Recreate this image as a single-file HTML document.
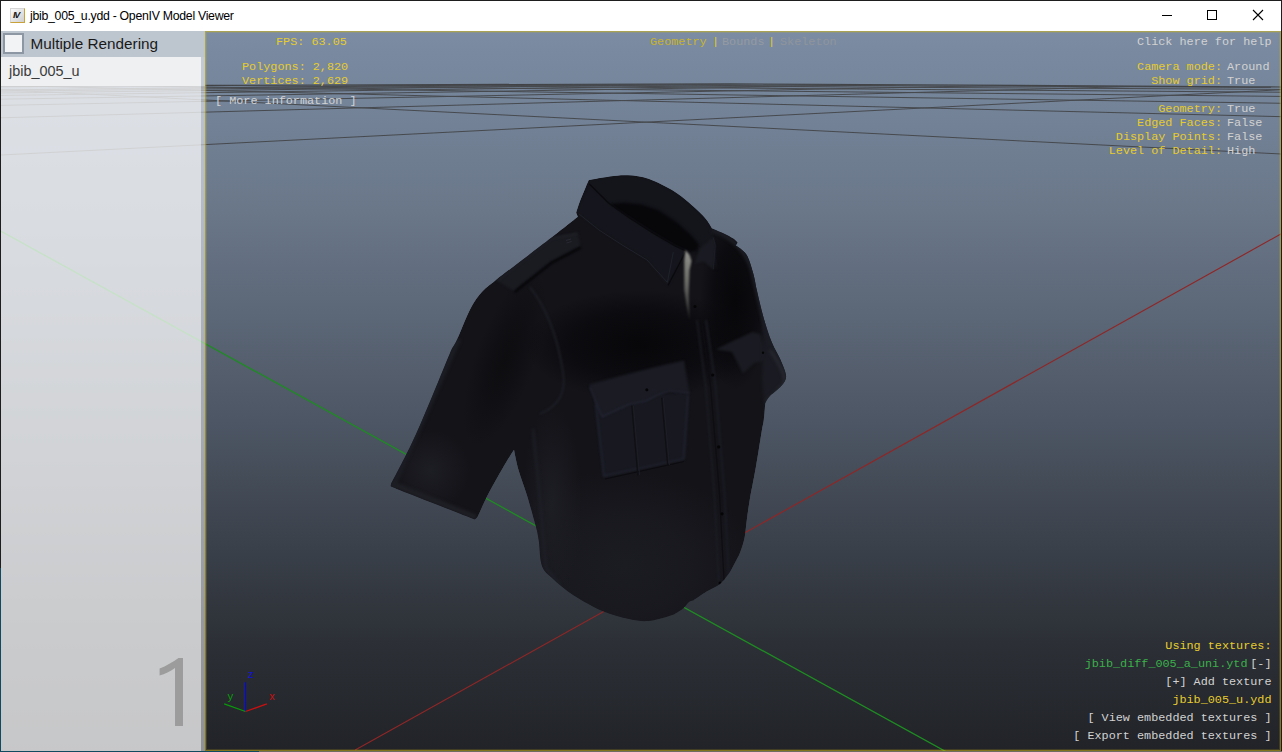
<!DOCTYPE html>
<html><head><meta charset="utf-8">
<style>
html,body{margin:0;padding:0;width:1282px;height:752px;overflow:hidden;background:#1e1e1e;}
body{position:relative;font-family:"Liberation Sans",sans-serif;}
.abs{position:absolute;}
svg{position:absolute;left:0;top:0;}
.mono{position:absolute;font-family:"Liberation Mono",monospace;font-size:11.8px;white-space:nowrap;line-height:14px;}
.r{text-align:right;}
.y{color:#e6cc2e;}
.w{color:#d2d2d2;}
.g{color:#3bb04a;}
</style></head><body>
<svg width="1282" height="752" viewBox="0 0 1282 752">
<defs>
<linearGradient id="bg" x1="0" y1="32" x2="0" y2="750" gradientUnits="userSpaceOnUse">
<stop offset="0" stop-color="#7b8ca3"/><stop offset="0.25" stop-color="#6a7789"/><stop offset="0.55" stop-color="#4c5563"/><stop offset="0.85" stop-color="#2c3036"/><stop offset="1" stop-color="#212328"/>
</linearGradient>
<clipPath id="cv"><rect x="1" y="31" width="1280" height="720"/></clipPath>
</defs>
<g clip-path="url(#cv)">
<rect x="1" y="31" width="1280" height="720" fill="url(#bg)"/>
<clipPath id="gclip"><path d="M0 86.8 L206 85.6 L730 84.2 L1250 87 L1282 87.2 L1282 752 L0 752 Z"/></clipPath>
<g stroke="#3c3c3c" stroke-width="1" fill="none" opacity="0.8" clip-path="url(#gclip)">
<line x1="0" y1="89.71" x2="1282" y2="154.04"/>
<line x1="0" y1="85.39" x2="1282" y2="116.68"/>
<line x1="0" y1="83.84" x2="1282" y2="103.29"/>
<line x1="0" y1="83.05" x2="1282" y2="96.42"/>
<line x1="0" y1="82.56" x2="1282" y2="92.23"/>
<line x1="0" y1="82.24" x2="1282" y2="89.41"/>
<line x1="0" y1="82.00" x2="1282" y2="87.38"/>
<line x1="0" y1="155.07" x2="1282" y2="89.71"/>
<line x1="0" y1="117.82" x2="1282" y2="82.34"/>
<line x1="0" y1="105.40" x2="1282" y2="79.89"/>
<line x1="0" y1="99.20" x2="1282" y2="78.66"/>
<line x1="0" y1="95.47" x2="1282" y2="77.92"/>
<line x1="0" y1="92.99" x2="1282" y2="77.43"/>
<line x1="0" y1="91.21" x2="1282" y2="77.08"/>
<line x1="0" y1="89.88" x2="1282" y2="76.82"/>
</g>
<path d="M0 86.6 L206 85.4 L730 83.8 L1250 86.8 L1282 87" stroke="#3a3a3a" stroke-width="1.2" fill="none" opacity="0.85"/>
<line x1="0" y1="230.7" x2="1000" y2="781.4" stroke="#1e8c22" stroke-width="1.3"/>
<line x1="355.2" y1="750" x2="1290" y2="228.9" stroke="#902626" stroke-width="1.15"/>

<defs>
<clipPath id="sc"><path d="M588.7 180.2 C588.7 180.2 603.5 177.3 610.0 176.5 C616.5 175.7 621.5 174.9 628.0 175.3 C634.5 175.7 641.2 176.2 649.0 179.0 C656.8 181.8 667.2 187.0 675.0 192.0 C682.8 197.0 690.7 204.3 696.0 209.0 C701.3 213.7 704.0 216.8 706.6 220.0 C709.2 223.2 711.8 228.2 711.8 228.2 C711.8 228.2 720.2 231.8 723.8 233.5 C727.3 235.2 730.8 237.1 733.1 238.6 C735.4 240.1 737.5 242.6 737.5 242.6 C737.5 242.6 735.8 245.5 735.8 245.5 C735.8 245.5 743.5 249.9 746.4 254.5 C749.3 259.1 751.4 267.0 753.2 273.2 C755.0 279.4 755.4 284.3 757.2 291.8 C759.0 299.3 761.4 310.0 763.8 318.4 C766.2 326.8 769.1 335.6 771.8 342.3 C774.5 349.0 777.6 353.4 779.8 358.3 C782.0 363.2 784.1 368.1 785.1 371.6 C786.1 375.2 786.5 376.9 785.6 379.6 C784.7 382.3 782.5 384.7 779.8 387.6 C777.0 390.5 771.5 394.2 769.1 396.9 C766.7 399.5 765.2 403.5 765.2 403.5 C765.2 403.5 764.4 415.3 763.8 420.0 C763.2 424.7 763.0 423.7 761.7 431.6 C760.4 439.5 757.8 456.2 755.8 467.5 C753.8 478.8 751.3 490.6 749.8 499.4 C748.3 508.1 747.7 513.6 746.8 520.0 C745.9 526.4 745.7 532.1 744.6 537.5 C743.5 542.9 741.9 547.8 740.2 552.2 C738.5 556.6 736.2 560.2 734.3 563.9 C732.3 567.5 730.9 570.7 728.5 574.1 C726.1 577.5 723.4 581.4 719.7 584.3 C716.0 587.2 710.9 588.9 706.5 591.6 C702.1 594.3 693.4 600.4 693.4 600.4 C693.4 600.4 690.6 600.7 689.0 601.9 C687.4 603.1 685.6 606.1 683.9 607.7 C682.2 609.3 681.1 610.0 678.8 611.4 C676.5 612.8 675.1 614.2 670.0 615.8 C664.9 617.4 655.1 620.5 648.3 621.0 C641.5 621.5 636.5 620.6 629.0 619.0 C621.5 617.4 612.8 615.4 603.6 611.5 C594.4 607.6 582.3 601.0 573.8 595.5 C565.3 590.0 557.9 583.5 552.6 578.5 C547.3 573.5 544.2 572.1 541.9 565.7 C539.6 559.3 539.8 546.9 538.7 540.2 C537.6 533.5 537.5 532.8 535.5 525.3 C533.5 517.8 529.8 504.7 527.0 495.5 C524.2 486.3 520.7 477.6 518.5 470.0 C516.3 462.4 514.0 449.8 514.0 449.8 C514.0 449.8 507.0 460.7 502.8 467.9 C498.6 475.1 493.0 484.9 488.8 493.0 C484.6 501.1 477.7 516.8 477.7 516.8 C477.7 516.8 474.9 519.6 474.9 519.6 C474.9 519.6 448.8 509.3 435.8 504.2 C422.8 499.1 404.2 491.9 396.7 488.9 C389.2 485.9 390.6 486.0 390.6 486.0 C390.6 486.0 391.2 483.3 391.2 483.3 C391.2 483.3 404.2 459.3 410.7 445.6 C417.2 431.9 423.7 416.4 430.2 401.0 C436.7 385.6 445.4 363.7 449.8 353.5 C454.2 343.3 453.5 347.3 456.8 340.0 C460.1 332.7 465.8 317.7 469.8 309.9 C473.8 302.1 476.6 298.0 481.0 293.0 C485.4 288.0 488.1 286.2 495.9 280.0 C503.6 273.8 518.2 263.0 527.5 255.9 C536.8 248.8 543.4 243.8 551.8 237.3 C560.2 230.8 577.8 216.8 577.8 216.8 C577.8 216.8 576.2 212.7 576.2 212.7 C576.2 212.7 578.5 205.2 580.0 201.0 C581.5 196.8 584.0 191.2 585.5 187.7 C587.0 184.2 588.7 180.2 588.7 180.2 Z"/></clipPath>
<radialGradient id="rgLow"><stop offset="0" stop-color="#1b1b22" stop-opacity="1"/><stop offset="0.5" stop-color="#1b1b22" stop-opacity="0.7"/><stop offset="1" stop-color="#1b1b22" stop-opacity="0"/></radialGradient>
<radialGradient id="rgLow2"><stop offset="0" stop-color="#1d1d24" stop-opacity="1"/><stop offset="1" stop-color="#1d1d24" stop-opacity="0"/></radialGradient>
<radialGradient id="rgDark"><stop offset="0" stop-color="#07070a" stop-opacity="1"/><stop offset="0.6" stop-color="#07070a" stop-opacity="0.6"/><stop offset="1" stop-color="#07070a" stop-opacity="0"/></radialGradient>
<radialGradient id="rgDark2"><stop offset="0" stop-color="#0d0d10" stop-opacity="1"/><stop offset="1" stop-color="#0d0d10" stop-opacity="0"/></radialGradient>
<linearGradient id="ushirt" x1="0" y1="250" x2="0" y2="321" gradientUnits="userSpaceOnUse"><stop offset="0" stop-color="#92928d"/><stop offset="0.45" stop-color="#6a6a66"/><stop offset="1" stop-color="#242426"/></linearGradient>
<filter id="b2" x="-20%" y="-20%" width="140%" height="140%" color-interpolation-filters="sRGB"><feGaussianBlur stdDeviation="1.5"/></filter>
<filter id="b1" x="-20%" y="-20%" width="140%" height="140%" color-interpolation-filters="sRGB"><feGaussianBlur stdDeviation="0.8"/></filter>
</defs>
<g clip-path="url(#sc)">
<path d="M588.7 180.2 C588.7 180.2 603.5 177.3 610.0 176.5 C616.5 175.7 621.5 174.9 628.0 175.3 C634.5 175.7 641.2 176.2 649.0 179.0 C656.8 181.8 667.2 187.0 675.0 192.0 C682.8 197.0 690.7 204.3 696.0 209.0 C701.3 213.7 704.0 216.8 706.6 220.0 C709.2 223.2 711.8 228.2 711.8 228.2 C711.8 228.2 720.2 231.8 723.8 233.5 C727.3 235.2 730.8 237.1 733.1 238.6 C735.4 240.1 737.5 242.6 737.5 242.6 C737.5 242.6 735.8 245.5 735.8 245.5 C735.8 245.5 743.5 249.9 746.4 254.5 C749.3 259.1 751.4 267.0 753.2 273.2 C755.0 279.4 755.4 284.3 757.2 291.8 C759.0 299.3 761.4 310.0 763.8 318.4 C766.2 326.8 769.1 335.6 771.8 342.3 C774.5 349.0 777.6 353.4 779.8 358.3 C782.0 363.2 784.1 368.1 785.1 371.6 C786.1 375.2 786.5 376.9 785.6 379.6 C784.7 382.3 782.5 384.7 779.8 387.6 C777.0 390.5 771.5 394.2 769.1 396.9 C766.7 399.5 765.2 403.5 765.2 403.5 C765.2 403.5 764.4 415.3 763.8 420.0 C763.2 424.7 763.0 423.7 761.7 431.6 C760.4 439.5 757.8 456.2 755.8 467.5 C753.8 478.8 751.3 490.6 749.8 499.4 C748.3 508.1 747.7 513.6 746.8 520.0 C745.9 526.4 745.7 532.1 744.6 537.5 C743.5 542.9 741.9 547.8 740.2 552.2 C738.5 556.6 736.2 560.2 734.3 563.9 C732.3 567.5 730.9 570.7 728.5 574.1 C726.1 577.5 723.4 581.4 719.7 584.3 C716.0 587.2 710.9 588.9 706.5 591.6 C702.1 594.3 693.4 600.4 693.4 600.4 C693.4 600.4 690.6 600.7 689.0 601.9 C687.4 603.1 685.6 606.1 683.9 607.7 C682.2 609.3 681.1 610.0 678.8 611.4 C676.5 612.8 675.1 614.2 670.0 615.8 C664.9 617.4 655.1 620.5 648.3 621.0 C641.5 621.5 636.5 620.6 629.0 619.0 C621.5 617.4 612.8 615.4 603.6 611.5 C594.4 607.6 582.3 601.0 573.8 595.5 C565.3 590.0 557.9 583.5 552.6 578.5 C547.3 573.5 544.2 572.1 541.9 565.7 C539.6 559.3 539.8 546.9 538.7 540.2 C537.6 533.5 537.5 532.8 535.5 525.3 C533.5 517.8 529.8 504.7 527.0 495.5 C524.2 486.3 520.7 477.6 518.5 470.0 C516.3 462.4 514.0 449.8 514.0 449.8 C514.0 449.8 507.0 460.7 502.8 467.9 C498.6 475.1 493.0 484.9 488.8 493.0 C484.6 501.1 477.7 516.8 477.7 516.8 C477.7 516.8 474.9 519.6 474.9 519.6 C474.9 519.6 448.8 509.3 435.8 504.2 C422.8 499.1 404.2 491.9 396.7 488.9 C389.2 485.9 390.6 486.0 390.6 486.0 C390.6 486.0 391.2 483.3 391.2 483.3 C391.2 483.3 404.2 459.3 410.7 445.6 C417.2 431.9 423.7 416.4 430.2 401.0 C436.7 385.6 445.4 363.7 449.8 353.5 C454.2 343.3 453.5 347.3 456.8 340.0 C460.1 332.7 465.8 317.7 469.8 309.9 C473.8 302.1 476.6 298.0 481.0 293.0 C485.4 288.0 488.1 286.2 495.9 280.0 C503.6 273.8 518.2 263.0 527.5 255.9 C536.8 248.8 543.4 243.8 551.8 237.3 C560.2 230.8 577.8 216.8 577.8 216.8 C577.8 216.8 576.2 212.7 576.2 212.7 C576.2 212.7 578.5 205.2 580.0 201.0 C581.5 196.8 584.0 191.2 585.5 187.7 C587.0 184.2 588.7 180.2 588.7 180.2 Z" fill="#131318"/>
<ellipse cx="625" cy="565" rx="130" ry="95" fill="url(#rgLow)"/>
<ellipse cx="552" cy="505" rx="30" ry="100" fill="url(#rgLow2)"/>
<ellipse cx="430" cy="470" rx="40" ry="40" fill="url(#rgLow2)"/>
<ellipse cx="640" cy="345" rx="115" ry="55" fill="url(#rgDark)"/>
<ellipse cx="735" cy="300" rx="35" ry="90" fill="url(#rgDark)"/>
<ellipse cx="505" cy="360" rx="30" ry="90" transform="rotate(20 505 360)" fill="url(#rgDark2)"/>
<!-- sleeve hem & edge -->
<path d="M390 486 L475 520 L477 515 L393 481 Z" fill="#1e1e25" filter="url(#b2)"/>
<path d="M456 338 L390 486 L395 488 L461 340 Z" fill="#1c1d24" filter="url(#b2)"/>
<!-- epaulette -->
<path d="M495.9 280.0 L527.5 255.9 L551.8 237.3 L577.8 232.6 L580.6 246.6 L551.8 261.5 L518.2 287.5 L514.5 291.3 Z" fill="#1a1b21" filter="url(#b1)"/>
<path d="M497 281 L527.5 257 L551.8 238.5 L577 233.5" stroke="#25262e" stroke-width="1" fill="none" filter="url(#b1)"/>
<path d="M514.5 292 L551.8 262.5 L580.6 247.5" stroke="#050507" stroke-width="2.2" fill="none" filter="url(#b1)"/>
<!-- collar -->
<path d="M588.7 180.2 L610.0 176.5 L628.0 175.3 L649.0 179.0 L675.0 192.0 L696.0 209.0 L706.6 220.0 L710.6 228.0 L713.0 232.0 L716.8 270.0 L706.0 245.0 L693.0 253.0 L686.0 249.0 L676.0 246.0 L660.0 238.0 L640.0 231.0 L620.0 222.0 L605.0 210.0 L596.0 196.0 L586.0 190.0 Z" fill="#14151b" filter="url(#b1)"/>
<path d="M606.0 204.5 L623.0 202.5 L641.0 204.3 L659.0 210.3 L677.0 222.3 L690.0 234.0 L699.0 244.0 L697.0 251.0 L689.0 252.0 L675.5 246.2 L652.8 233.0 L628.8 217.5 Z" fill="#07070a" filter="url(#b2)"/>
<path d="M589.0 184.0 L608.5 203.0 L628.8 217.5 L652.8 233.0 L675.5 246.2 L686.0 251.0 L668.0 285.4 L646.8 259.0 L622.9 244.5 L598.9 228.8 L576.6 212.0 Z" fill="#15161d" filter="url(#b1)"/>
<path d="M589.4 184 L608.5 203 L628.8 217.5 L652.8 233 L675.5 246.2 L686 251" stroke="#0a0a0d" stroke-width="1.2" fill="none"/>
<path d="M579 214 L599 230 L623 245.5 L647 260 L667 282" stroke="#20222b" stroke-width="1" fill="none"/>
<path d="M673.3 252.1 L667.3 282.7" stroke="#20222b" stroke-width="1" fill="none"/>
<path d="M686 251 L668 285.4" stroke="#0a0a0c" stroke-width="1.2" fill="none"/>
<path d="M713.2 237.5 L715.2 245.5 L713.2 269.4" stroke="#1e2029" stroke-width="1" fill="none"/>
<path d="M699.9 248.2 L713.2 237.5 L715.2 245.5 L713.2 269.4 L703.9 261.4 L694.6 264.1 Z" fill="#1a1b22" filter="url(#b1)"/>
<path d="M685.5 250.0 L689.6 255.0 L691.5 261.0 L689.5 270.0 L688.8 295.0 L689.5 320.0 L686.5 305.0 L684.3 290.0 L684.3 260.0 Z" fill="url(#ushirt)" filter="url(#b1)"/>
<!-- pocket -->
<path d="M594.0 399.8 L629.8 403.8 L659.7 393.8 L689.6 392.8 L685.6 457.6 L683.6 459.6 L603.0 477.5 Z" fill="#171820" filter="url(#b1)"/>
<path d="M589.0 384.5 L620.0 376.0 L655.0 367.0 L684.0 360.5 L689.6 392.8 L669.7 390.8 L659.7 393.8 L645.8 400.8 L629.8 403.8 L602.0 416.7 Z" fill="#1a1b23" filter="url(#b1)"/>
<path d="M590 387 L602 416.7 L629.8 403.8 L645.8 400.8 L659.7 393.8 L669.7 390.8 L689.6 392.8" stroke="#262836" stroke-width="1.3" fill="none" filter="url(#b1)"/>
<path d="M596 404 L604 476 L683.6 459 L688 395" stroke="#222431" stroke-width="1.4" fill="none" filter="url(#b1)"/>
<path d="M605 479 L684 461.5" stroke="#0c0c10" stroke-width="1" fill="none"/>
<path d="M631.8 405.8 L637.8 475.5 M661.7 397.8 L667.7 465.6" stroke="#0f0f13" stroke-width="1.2" fill="none"/><path d="M633.5 406 L639.5 475 M663.4 398 L669.4 465" stroke="#1d1e26" stroke-width="1" fill="none"/>
<path d="M716.0 349.5 L728.7 343.0 L752.7 331.9 L760.6 334.3 L763.8 344.7 L765.4 360.6 L754.3 363.0 L743.0 373.4 L732.0 352.0 Z" fill="#1a1b22" filter="url(#b1)"/>
<path d="M760.6 300.0 L768.6 335.0 L779.8 354.3 L786.2 375.0 L784.6 383.0 L776.6 392.5 L766.2 400.5 L765.4 420.0 L762.0 380.0 L763.0 340.0 Z" fill="#1a1b22" filter="url(#b2)"/>
<!-- placket -->
<path d="M697 320 L705.7 386.4 L714.4 494.4 L718.7 580.8 L723 625" stroke="#1f2029" stroke-width="1.2" fill="none" filter="url(#b1)"/>
<path d="M701.5 320 L710.5 386 L719.5 494 L724 580 L728.5 625" stroke="#0e0e12" stroke-width="1.2" fill="none"/>
<path d="M706 320 L715.5 386 L724.5 494 L729 580 L733.5 625" stroke="#1d1e28" stroke-width="1.6" fill="none" filter="url(#b1)"/>
<path d="M530 287 C548 310 558 340 563 372 C566 392 560 405 540 414" stroke="#1f2029" stroke-width="1.6" fill="none" filter="url(#b1)"/>
<!-- left body edge highlight -->
<path d="M533 429 L540 500 L546 568 L560 585" stroke="#202129" stroke-width="2" fill="none" filter="url(#b2)"/>
<path d="M712 230 C730 236 745 248 752 270 C758 295 764 325 772 345 C778 358 785 368 785 378" stroke="#1c1d24" stroke-width="4" fill="none" filter="url(#b2)"/>
<path d="M770 350 C780 365 786 375 784 383 C778 392 770 398 766 402" stroke="#272830" stroke-width="3" fill="none" filter="url(#b2)"/>
<path d="M566 240.5 L571 239 M566.5 243 L571.5 241.5" stroke="#2a2b33" stroke-width="0.9"/>
<!-- buttons -->
<g fill="#050506"><circle cx="695" cy="306.5" r="1.5"/><circle cx="712.8" cy="375" r="1.6"/><circle cx="718.7" cy="446.9" r="1.6"/><circle cx="722" cy="513.8" r="1.6"/><circle cx="720" cy="583" r="1.5"/><circle cx="646.8" cy="389.8" r="1.5"/><circle cx="763" cy="352.7" r="1.2"/></g>
</g>

</g>
</svg>
<div class="abs" style="left:0;top:751px;width:259px;height:1px;background:#0f4a60;"></div>
<div class="abs" style="left:259px;top:751px;width:1023px;height:1px;background:#6e6d60;"></div>
<div class="abs" style="left:0;top:568px;width:1px;height:183px;background:#0f4a60;"></div>
<!-- title bar -->
<div class="abs" style="left:1px;top:1px;width:1280px;height:30px;background:#fff;">
  <div class="abs" style="left:9px;top:7px;width:15px;height:15px;background:linear-gradient(135deg,#fafafa,#cfcfcf);border:1px solid;border-color:#d6d6d6 #c9a23a #c9a23a #d6d6d6;box-sizing:border-box;"></div>
  <div class="abs" style="left:12px;top:9px;font:italic bold 9px 'Liberation Sans',sans-serif;color:#151515;letter-spacing:-1.2px;">IV</div>
  <div class="abs" style="left:29px;top:8px;font-size:12.3px;letter-spacing:-0.28px;color:#000;white-space:nowrap;">jbib_005_u.ydd - OpenIV Model Viewer</div>
  <svg width="1280" height="30">
    <line x1="1161" y1="14.5" x2="1171" y2="14.5" stroke="#000" stroke-width="1"/>
    <rect x="1206.5" y="9.5" width="9" height="9" fill="none" stroke="#000" stroke-width="1"/>
    <path d="M1252 9 L1262 19 M1262 9 L1252 19" stroke="#000" stroke-width="1.1"/>
  </svg>
</div>
<!-- left panel -->
<div class="abs" style="left:1px;top:86px;width:200px;height:665px;background:rgba(255,255,255,0.75);"></div>
<div class="abs" style="left:201px;top:86px;width:4px;height:665px;background:rgba(255,255,255,0.5);"></div>
<div class="abs" style="left:1px;top:31px;width:204px;height:26px;background:#bdc5cf;"></div>
<div class="abs" style="left:1px;top:57px;width:200px;height:29px;background:#eef0f2;"></div>
<div class="abs" style="left:201px;top:57px;width:4px;height:29px;background:#c3cad4;"></div>
<div class="abs" style="left:3px;top:33px;width:21px;height:21px;box-sizing:border-box;border:2px solid #8c97a3;background:#f1f3f5;"></div>
<div class="abs" style="left:30.5px;top:34.5px;font-size:15.3px;color:#1a1a1a;white-space:nowrap;">Multiple Rendering</div>
<div class="abs" style="left:9px;top:63px;font-size:14.4px;color:#3a3a3a;white-space:nowrap;">jbib_005_u</div>
<svg width="1282" height="752"><path d="M183 658 L183 726 L175 726 L175 668 C170 671.5 165 674 159.6 675.5 L159.6 668.6 C166 666 173 662 178.5 658 Z" fill="#9c9c9c"/></svg>
<!-- viewport border -->
<svg width="1282" height="752"><rect x="205.5" y="31.5" width="1075" height="719" fill="none" stroke="rgba(210,184,20,0.55)" stroke-width="1"/><rect x="206.5" y="32.5" width="1073" height="717" fill="none" stroke="rgba(210,184,20,0.18)" stroke-width="1"/></svg>
<!-- texts -->
<div class="mono y" style="left:276px;top:35px;">FPS: 63.05</div>
<div class="mono y" style="left:242px;top:60px;">Polygons: 2,820</div>
<div class="mono y" style="left:242px;top:74px;">Vertices: 2,629</div>
<div class="mono w" style="left:215px;top:93.5px;">[ More information ]</div>
<div class="mono" style="left:650px;top:35px;color:#c8b42c;">Geometry</div>
<div class="mono" style="left:712px;top:35px;color:#e2c82c;">|</div>
<div class="mono" style="left:722px;top:35px;color:#959aa1;">Bounds</div>
<div class="mono" style="left:768px;top:35px;color:#e2c82c;">|</div>
<div class="mono" style="left:780px;top:35px;color:#90959c;">Skeleton</div>
<div class="mono w" style="left:1137px;top:35px;">Click here for help</div>
<div class="mono y r" style="right:60px;top:60px;">Camera mode:</div>
<div class="mono w" style="left:1227px;top:60px;">Around</div>
<div class="mono y r" style="right:60px;top:74px;">Show grid:</div>
<div class="mono w" style="left:1227px;top:74px;">True</div>
<div class="mono y r" style="right:60px;top:102px;">Geometry:</div>
<div class="mono w" style="left:1227px;top:102px;">True</div>
<div class="mono y r" style="right:60px;top:116px;">Edged Faces:</div>
<div class="mono w" style="left:1227px;top:116px;">False</div>
<div class="mono y r" style="right:60px;top:130px;">Display Points:</div>
<div class="mono w" style="left:1227px;top:130px;">False</div>
<div class="mono y r" style="right:60px;top:144px;">Level of Detail:</div>
<div class="mono w" style="left:1227px;top:144px;">High</div>
<div class="mono y r" style="right:10.5px;top:639px;">Using textures:</div>
<div class="mono g r" style="right:34.5px;top:657px;">jbib_diff_005_a_uni.ytd</div>
<div class="mono w r" style="right:10.5px;top:657px;">[-]</div>
<div class="mono w r" style="right:10.5px;top:675px;">[+] Add texture</div>
<div class="mono y r" style="right:10.5px;top:693px;">jbib_005_u.ydd</div>
<div class="mono w r" style="right:10.5px;top:711px;">[ View embedded textures ]</div>
<div class="mono w r" style="right:10.5px;top:729px;">[ Export embedded textures ]</div>
<!-- gizmo -->
<svg width="1282" height="752">
<line x1="245.5" y1="682.3" x2="245.5" y2="711.5" stroke="#0808d8" stroke-width="1.25"/>
<line x1="245.5" y1="711.5" x2="224.2" y2="703.9" stroke="#0a9a0a" stroke-width="1.3"/>
<line x1="245.5" y1="711.5" x2="266.9" y2="703.9" stroke="#c81010" stroke-width="1.3"/>
<text x="248" y="677.8" font-family="Liberation Sans" font-size="11.5" fill="#1010d8">z</text>
<text x="227.5" y="700" font-family="Liberation Sans" font-size="11.5" fill="#0a9a0a">y</text>
<text x="269.3" y="700" font-family="Liberation Sans" font-size="11" fill="#c81010">x</text>
</svg>
</body></html>
